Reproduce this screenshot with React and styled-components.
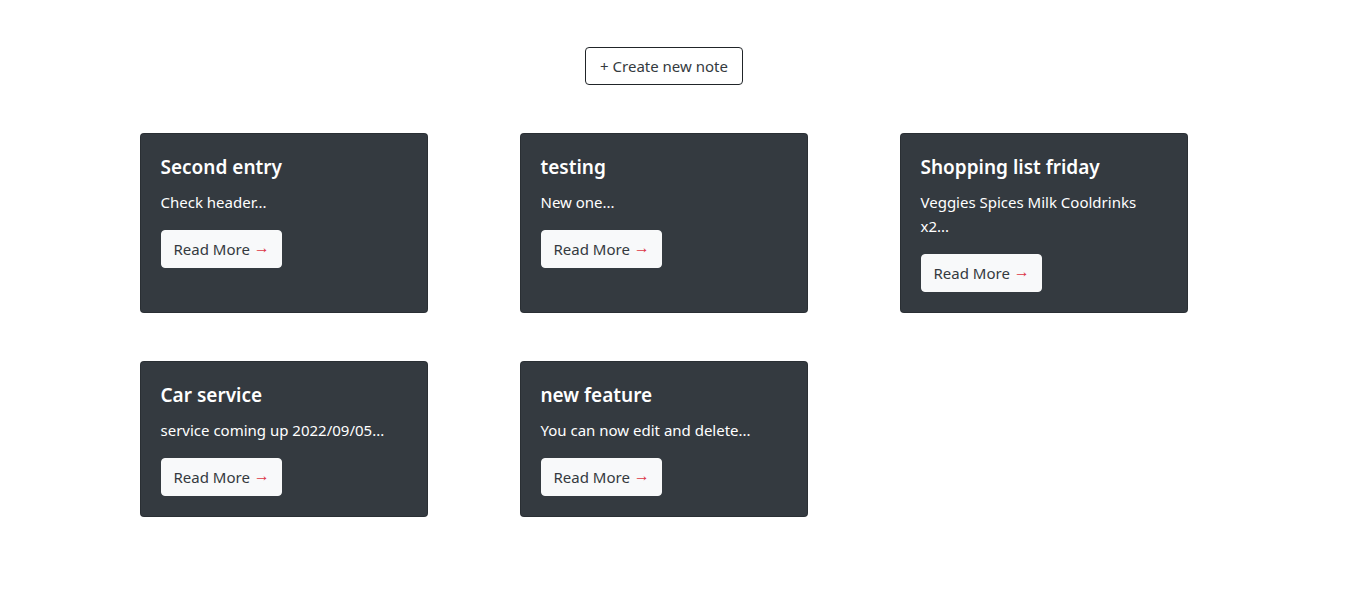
import React from 'react'
import styled, { createGlobalStyle } from 'styled-components'

const notes = [
  { id: 1, title: 'Second entry', body: 'Check header...' },
  { id: 2, title: 'testing', body: 'New one...' },
  { id: 3, title: 'Shopping list friday', body: 'Veggies Spices Milk Cooldrinks x2...' },
  { id: 4, title: 'Car service', body: 'service coming up 2022/09/05...' },
  { id: 5, title: 'new feature', body: 'You can now edit and delete...' },
]

function App() {
  return (
    <>
      <GlobalStyle />
      <Container>
        <Top>
          <CreateButton>+ Create new note</CreateButton>
        </Top>
        <Grid>
          {notes.map((note) => (
            <Col key={note.id}>
              <Card>
                <Title>{note.title}</Title>
                <Text>{note.body}</Text>
                <ReadMore>
                  Read More <Arrow>→</Arrow>
                </ReadMore>
              </Card>
            </Col>
          ))}
        </Grid>
      </Container>
    </>
  )
}

export default App

const GlobalStyle = createGlobalStyle`
  body {
    margin: 0;
    background: #fff;
    color: #212529;
    font-family: "Noto Sans", "Open Sans", sans-serif;
    font-size: 16px;
    line-height: 1.5;
  }
  * { box-sizing: border-box; }
`

const Container = styled.div`
  width: 1140px;
  margin: 0 auto;
  padding: 47px 12px 40px;
`

const Top = styled.div`
  display: flex;
  justify-content: center;
  padding-right: 19px;
  margin-bottom: 24px;
`

const CreateButton = styled.button`
  height: 38px;
  width: 158px;
  padding: 0 12px;
  border: 1px solid #212529;
  border-radius: 4px;
  background: #fff;
  color: #343a40;
  font-family: inherit;
  font-size: 15px;
  cursor: pointer;
`

const Grid = styled.div`
  display: grid;
  grid-template-columns: repeat(3, 1fr);
  margin: 0 -12px;
`

const Col = styled.div`
  display: flex;
  padding: 0 12px;
`

const Card = styled.div`
  width: 288px;
  margin: 24px;
  padding: 20px;
  background: #343a40;
  border: 1px solid rgba(0, 0, 0, 0.175);
  border-radius: 4px;
  color: #fff;
`

const Title = styled.h5`
  margin: 0 0 10px;
  font-size: 19px;
  font-weight: 600;
  line-height: 26px;
`

const Text = styled.p`
  margin: 0 0 16px;
  font-size: 15px;
  line-height: 24px;
`

const ReadMore = styled.button`
  height: 38px;
  width: 121px;
  padding: 0 12px;
  border: 1px solid #f8f9fa;
  border-radius: 4px;
  background: #f8f9fa;
  color: #343a40;
  font-family: inherit;
  font-size: 15px;
  text-align: left;
  white-space: nowrap;
  cursor: pointer;
`

const Arrow = styled.span`
  color: #dc3545;
  font-family: "Liberation Sans", sans-serif;
  font-size: 16px;
  vertical-align: 2px;
`
